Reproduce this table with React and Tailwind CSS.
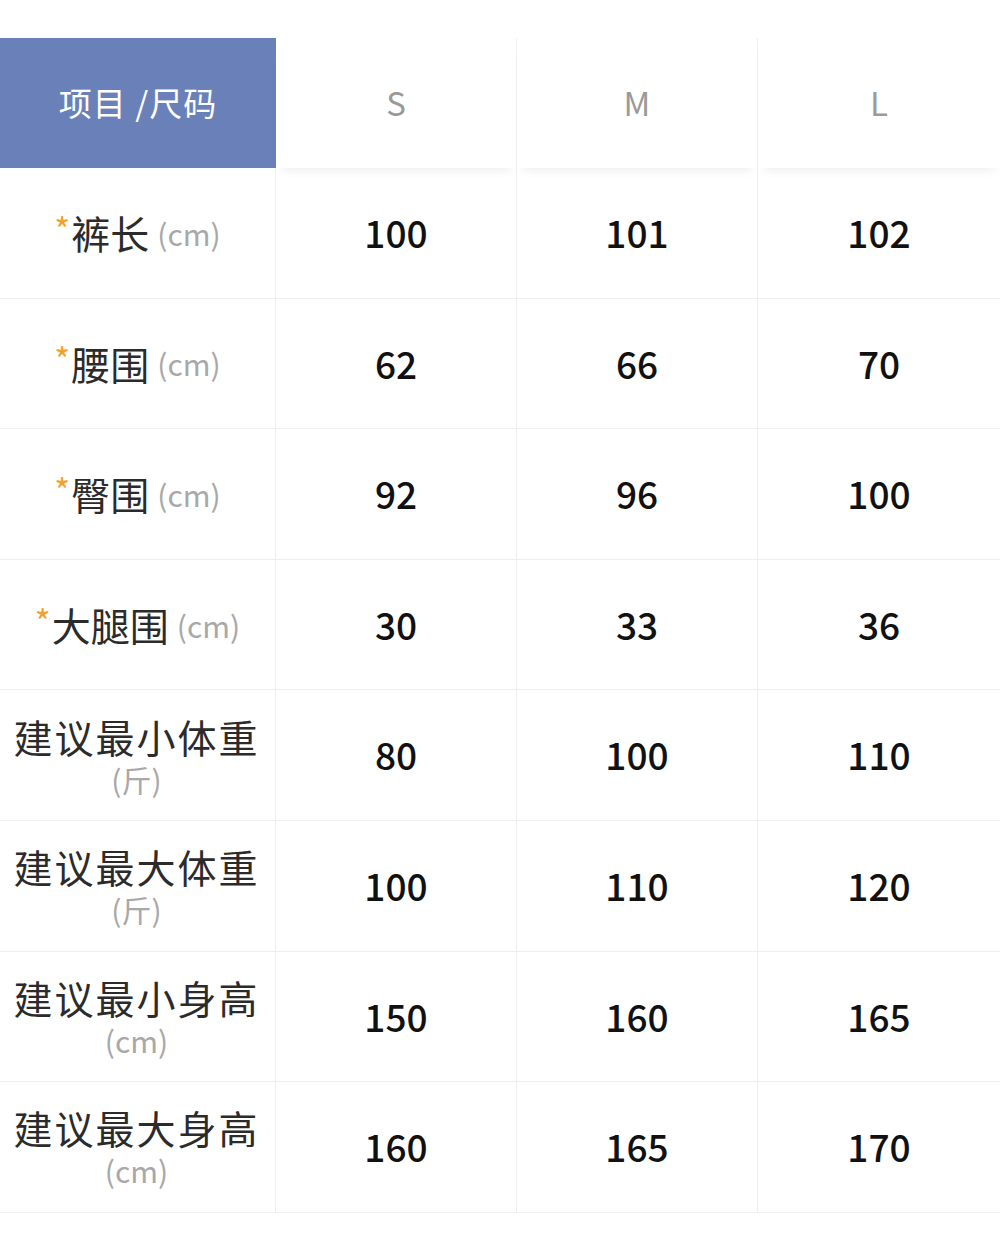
import React from 'react';

const sizes = ['S', 'M', 'L'];

const rows = [
    { label: '裤长', unit: '(cm)', star: true, values: ['100', '101', '102'] },
    { label: '腰围', unit: '(cm)', star: true, values: ['62', '66', '70'] },
    { label: '臀围', unit: '(cm)', star: true, values: ['92', '96', '100'] },
    { label: '大腿围', unit: '(cm)', star: true, values: ['30', '33', '36'] },
    { label: '建议最小体重', unit: '(斤)', values: ['80', '100', '110'] },
    { label: '建议最大体重', unit: '(斤)', values: ['100', '110', '120'] },
    { label: '建议最小身高', unit: '(cm)', values: ['150', '160', '165'] },
    { label: '建议最大身高', unit: '(cm)', values: ['160', '165', '170'] },
];

const font = { fontFamily: '"Noto Sans CJK SC", "Liberation Sans", sans-serif' };

const LabelCell = ({ row }) => {
    if (row.star) {
        return (
            <div className="flex h-full items-center justify-center border-r border-[#eeeeee]">
                <span className="mr-[1px] -translate-y-[4px] text-[34px] leading-none text-[#f2a12c]">*</span>
                <span className="text-[39px] leading-none text-[#2b2b2b]">{row.label}</span>
                <span className="ml-[8px] text-[30px] leading-none text-[#a8a8a8]">{row.unit}</span>
            </div>
        );
    }
    return (
        <div className="flex h-full flex-col items-center justify-center border-r border-[#eeeeee] pr-[2px]">
            <span className="text-[39px] leading-[47px] tracking-[2px] text-[#2b2b2b]">{row.label}</span>
            <span className="text-[30px] leading-[38px] text-[#a8a8a8]">{row.unit}</span>
        </div>
    );
};

export default function App() {
    return (
        <div className="min-h-[1237px] w-[1000px] bg-white pt-[38px]" style={font}>
            <div className="grid grid-cols-[276px_241px_241px_242px]">
                <div className="flex h-[130px] items-center justify-center bg-[#6a80b9] text-[33px] tracking-[1px] text-white">
                    项目 /尺码
                </div>
                {sizes.map((s, i) => (
                    <div
                        key={s}
                        className={`flex h-[130px] items-center justify-center text-[33px] text-[#9a9a9a] shadow-[0_8px_10px_-6px_rgba(0,0,0,0.08)] ${i < 2 ? 'border-r border-[#f0f0f0]' : ''}`}
                    >
                        {s}
                    </div>
                ))}
            </div>
            {rows.map((row) => (
                <div
                    key={row.label}
                    className="grid h-[130.6px] grid-cols-[276px_241px_241px_242px] border-b border-[#eeeeee]"
                >
                    <LabelCell row={row} />
                    {row.values.map((v, i) => (
                        <div
                            key={i}
                            className={`flex items-center justify-center text-[37px] font-medium text-[#111111] ${i < 2 ? 'border-r border-[#eeeeee]' : ''}`}
                        >
                            {v}
                        </div>
                    ))}
                </div>
            ))}
        </div>
    );
}
